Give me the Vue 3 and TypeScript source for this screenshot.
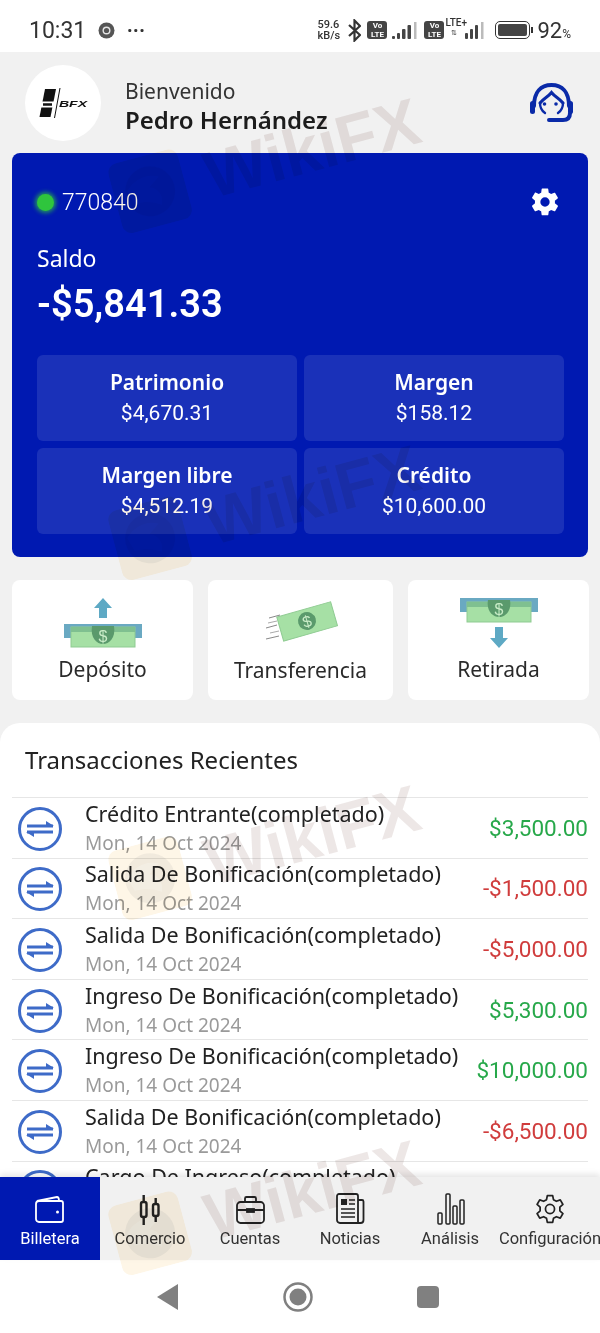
<script setup lang="ts">
const tiles = [
  { label: 'Patrimonio', value: '$4,670.31' },
  { label: 'Margen', value: '$158.12' },
  { label: 'Margen libre', value: '$4,512.19' },
  { label: 'Crédito', value: '$10,600.00' },
]

const rows = [
  { title: 'Crédito Entrante(completado)', amount: '$3,500.00', up: true },
  { title: 'Salida De Bonificación(completado)', amount: '-$1,500.00', up: false },
  { title: 'Salida De Bonificación(completado)', amount: '-$5,000.00', up: false },
  { title: 'Ingreso De Bonificación(completado)', amount: '$5,300.00', up: true },
  { title: 'Ingreso De Bonificación(completado)', amount: '$10,000.00', up: true },
  { title: 'Salida De Bonificación(completado)', amount: '-$6,500.00', up: false },
  { title: 'Cargo De Ingreso(completado)', amount: '', up: true },
]

const marks = [
  { top: 120, left: 110 },
  { top: 467, left: 110 },
  { top: 807, left: 110 },
  { top: 1162, left: 110 },
]
</script>

<template>
  <div class="screen">
    <div class="status">
      <div class="status-left">
        <span class="clock">10:31</span>
        <svg width="17" height="17" viewBox="0 0 17 17"><circle cx="8.500" cy="8.500" r="8" fill="#555" /><circle cx="8.500" cy="8.500" r="4" fill="#e4e4e4" /><circle cx="8.500" cy="8.500" r="2.600" fill="#555" /></svg>
        <span class="dots">···</span>
      </div>
      <div class="status-right">
        <span class="speed">59.6<br />kB/s</span>
        <svg class="bt" width="13" height="23" viewBox="0 0 13 23" fill="none" stroke="#333" stroke-width="2.200"><path d="M1 6l11 10-5.500 5.500V1.500L12 7 1 17" /></svg>
        <span class="volte">Vo<br />LTE</span>
        <svg class="sig1" width="26" height="19" viewBox="0 0 26 19" fill="#444"><rect x="0" y="15" width="3" height="3" rx="1" /><rect x="5" y="12" width="3" height="6" rx="1" /><rect x="10" y="8" width="3.500" height="10" rx="1" /><rect x="15.500" y="4" width="3.500" height="14" rx="1" /><rect x="22" y="1" width="2.500" height="17" fill="#bbb" /></svg>
        <span class="volte">Vo<br />LTE</span>
        <span class="lte">LTE+<br /><i>⇅</i></span>
        <svg class="sig2" width="20" height="19" viewBox="0 0 20 19" fill="#444"><rect x="0" y="12" width="3" height="6" rx="1" /><rect x="5" y="8" width="3" height="10" rx="1" /><rect x="10" y="4" width="3" height="14" rx="1" /><rect x="16" y="1" width="2.500" height="17" fill="#bbb" /></svg>
        <span class="battery"><b></b></span>
        <span class="nub"></span>
        <span class="pct">92<small>%</small></span>
      </div>
    </div>

    <header class="head">
      <div class="avatar">
        <svg width="50" height="34" viewBox="0 0 50 34">
          <path d="M7 3h11l-5.500 28H1.500z" fill="#111" />
          <path d="M1 15.500h19v6H1z" fill="#fff" />
          <path d="M5 18.500h9" stroke="#111" stroke-width="2.500" />
          <path d="M22 2l-5.500 30" stroke="#111" stroke-width="1" />
          <text x="21" y="21" class="logo-text" textLength="28" lengthAdjust="spacingAndGlyphs">BFX</text>
        </svg>
      </div>
      <div class="hello">
        <div class="hello-sub">Bienvenido</div>
        <div class="hello-name">Pedro Hernández</div>
      </div>
      <svg class="agent" width="46" height="42" viewBox="0 0 46 42" fill="none" stroke="#0a2aa8" stroke-linecap="round">
        <path d="M6 24C6 10 13 3 23.500 3S41 10 41 24" stroke-width="4" />
        <rect x="2" y="19" width="5" height="13" rx="2.500" fill="#0a2aa8" stroke="none" />
        <rect x="40" y="19" width="5" height="13" rx="2.500" fill="#0a2aa8" stroke="none" />
        <path d="M12 21c4-5 8-6 11.500-10.500C27 15 31 16 35 21" stroke-width="3" />
        <path d="M12 21c0 5 2 8 5 10M35 21c0 5-2 8-5 10" stroke-width="2.400" />
        <circle cx="16.500" cy="22" r="1.800" fill="#0a2aa8" stroke="none" />
        <circle cx="28" cy="22" r="1.800" fill="#0a2aa8" stroke="none" />
        <path d="M42 31c0 5-3 7-7 7H21" stroke-width="4" />
      </svg>
    </header>

    <section class="card">
      <div class="card-top">
        <div class="acct"><span class="dot"></span>770840</div>
        <svg width="32" height="32" viewBox="0 0 24 24" fill="#fff"><path fill-rule="evenodd" d="M19.400 13c.04-.3.06-.65.06-1s-.02-.7-.07-1l2.100-1.650c.2-.15.24-.42.12-.64l-2-3.460c-.12-.22-.4-.3-.6-.22l-2.500 1c-.52-.4-1.080-.73-1.700-.98l-.37-2.650A.5.5 0 0 0 14 1.900h-4a.5.5 0 0 0-.5.420l-.37 2.650c-.62.25-1.180.59-1.700.98l-2.500-1c-.22-.08-.48 0-.6.22l-2 3.460c-.13.22-.07.49.12.64L4.560 11c-.05.32-.1.66-.1 1s.03.680.08 1l-2.100 1.650c-.2.150-.25.420-.13.640l2 3.460c.12.220.4.300.6.220l2.500-1c.52.400 1.080.730 1.700.980l.37 2.650c.05.240.25.420.5.420h4c.25 0 .46-.18.5-.42l.37-2.650c.62-.25 1.180-.58 1.700-.98l2.500 1c.22.080.48 0 .6-.22l2-3.460c.12-.22.07-.49-.12-.64zM12 15.500a3.500 3.500 0 1 1 0-7 3.500 3.500 0 0 1 0 7z" /></svg>
      </div>
      <div class="saldo">Saldo</div>
      <div class="balance">-$5,841.33</div>
      <div class="tiles">
        <div v-for="t in tiles" :key="t.label" class="tile">
          <div class="tile-label">{{ t.label }}</div>
          <div class="tile-value">{{ t.value }}</div>
        </div>
      </div>
    </section>

    <section class="actions">
      <div class="action">
        <svg width="80" height="54" viewBox="0 0 80 54">
          <path d="M40 1l9 10h-5v10h-8V11h-5z" fill="#5ea9c4" />
          <rect x="1" y="27" width="78" height="14" fill="#6aa9c2" />
          <rect x="8" y="30" width="64" height="20" fill="#a6e0a5" stroke="#8fcb92" />
          <rect x="8" y="30" width="64" height="5" fill="#7fc090" />
          <path d="M29 29h22c2 12-5 18-11 18S27 41 29 29z" fill="#5a9a6c" />
          <text x="40" y="45" class="bill-s">$</text>
        </svg>
        <span class="action-label">Depósito</span>
      </div>
      <div class="action action-mid">
        <svg width="76" height="44" viewBox="0 0 76 44">
          <g transform="rotate(-16 44 21)">
            <rect x="16" y="9" width="56" height="25" fill="#a6e0a5" stroke="#8fcb92" />
            <circle cx="44" cy="21" r="9" fill="#5a9a6c" />
            <text x="44" y="27" class="bill-s">$</text>
          </g>
          <path d="M6 18l11-3M3 28l11-3M3 39l13-3" stroke="#888" stroke-width="1" />
          <path d="M5 23l9-2M7 33l9-2" stroke="#aaa" stroke-width="1" />
        </svg>
        <span class="action-label">Transferencia</span>
      </div>
      <div class="action">
        <svg width="80" height="54" viewBox="0 0 80 54">
          <rect x="1" y="1" width="78" height="14" fill="#6aa9c2" />
          <rect x="8" y="5" width="64" height="20" fill="#a6e0a5" stroke="#8fcb92" />
          <rect x="8" y="5" width="64" height="5" fill="#7fc090" />
          <path d="M29 3h22c2 11-5 17-11 17S27 14 29 3z" fill="#5a9a6c" />
          <text x="40" y="18" class="bill-s">$</text>
          <path d="M40 51l-9-10h5V30h8v11h5z" fill="#5ea9c4" />
        </svg>
        <span class="action-label">Retirada</span>
      </div>
    </section>

    <section class="recent">
      <h2 class="recent-title">Transacciones Recientes</h2>
      <div v-for="(r, i) in rows" :key="i" class="row">
        <svg class="swap" width="46" height="46" viewBox="0 0 46 46" fill="none" stroke="#3e6bc8">
          <circle cx="23" cy="23" r="20.500" stroke-width="3" />
          <path d="M10 20h26M36 26H10" stroke-width="3" />
          <path d="M29 15l8 5h-8zM17 31l-8-5h8z" fill="#3e6bc8" stroke="none" />
        </svg>
        <div class="row-text">
          <div class="row-title">{{ r.title }}</div>
          <div class="row-date">Mon, 14 Oct 2024</div>
        </div>
        <div class="row-amount" :class="r.up ? 'up' : 'down'">{{ r.amount }}</div>
      </div>
    </section>

    <nav class="tabs">
      <div class="tab tab-on">
        <svg width="30" height="30" viewBox="0 0 30 30" fill="none" stroke="#fff" stroke-width="1.800"><path d="M1 9a3 3 0 0 1 3-3h22a2 2 0 0 1 2 2v17a2 2 0 0 1-2 2H4a3 3 0 0 1-3-3z" /><path d="M2 6l20-4c1 0 2 1 2 4" /><circle cx="22.500" cy="17" r="1.500" fill="#fff" stroke="none" /></svg>
        <span>Billetera</span>
      </div>
      <div class="tab">
        <svg width="30" height="30" viewBox="0 0 30 30" fill="none" stroke="#222" stroke-width="2.400"><rect x="6" y="7" width="5.500" height="15" rx="2" /><path d="M8.700 0v7M8.700 22v8" /><rect x="18" y="9" width="5.500" height="12" rx="2" /><path d="M20.700 3v6M20.700 21v6" /></svg>
        <span>Comercio</span>
      </div>
      <div class="tab">
        <svg width="30" height="30" viewBox="0 0 30 30" fill="none" stroke="#222" stroke-width="1.800"><rect x="2" y="7" width="27" height="21" rx="3.500" /><path d="M10 7V3.500A1.500 1.500 0 0 1 11.500 2h8A1.500 1.500 0 0 1 21 3.500V7M2 15h27" /><rect x="12" y="14" width="7" height="3" fill="#222" /></svg>
        <span>Cuentas</span>
      </div>
      <div class="tab">
        <svg width="30" height="32" viewBox="0 0 30 32" fill="none" stroke="#222" stroke-width="1.800"><path d="M2 3a2 2 0 0 1 2-2h17a2 2 0 0 1 2 2v27H5a3 3 0 0 1-3-3z" /><path d="M23 7h4a1.500 1.500 0 0 1 1.500 1.500V27a3 3 0 0 1-3 3H20" /><rect x="6" y="6" width="6" height="6" fill="#222" stroke="none" /><path d="M14 7h6M14 11h6M6 16h14M6 20h14M6 24h14" stroke-width="1.600" /></svg>
        <span>Noticias</span>
      </div>
      <div class="tab">
        <svg width="30" height="32" viewBox="0 0 30 32" fill="none" stroke="#222" stroke-width="1.500"><rect x="3" y="20" width="4" height="11" rx="1" /><rect x="11" y="1" width="4" height="30" rx="1" /><rect x="18" y="13" width="4" height="18" rx="1" /><rect x="25" y="7" width="4" height="24" rx="1" /></svg>
        <span>Análisis</span>
      </div>
      <div class="tab">
        <svg width="32" height="32" viewBox="0 0 24 24" fill="none" stroke="#222" stroke-width="1.300" stroke-linejoin="round"><path d="M10 2h4l.6 3 2.200 1.200 2.900-1 2 3.400-2.300 2v2.800l2.300 2-2 3.400-2.900-1L14.600 19l-.6 3h-4l-.6-3-2.200-1.200-2.900 1-2-3.400 2.300-2v-2.800l-2.300-2 2-3.400 2.900 1L9.400 5z" /><circle cx="12" cy="12" r="3.400" /></svg>
        <span>Configuración</span>
      </div>
    </nav>

    <div class="navbar">
      <svg width="22" height="26" viewBox="0 0 22 26"><path d="M21 0v26L0 13z" fill="#808080" /></svg>
      <svg width="30" height="30" viewBox="0 0 30 30"><circle cx="15" cy="15" r="13.500" fill="none" stroke="#808080" stroke-width="2.500" /><circle cx="15" cy="15" r="8.500" fill="#808080" /></svg>
      <span class="nav-square"></span>
    </div>

    <div v-for="(m, i) in marks" :key="i" class="mark" :style="{ top: m.top + 'px', left: m.left + 'px' }">
      <svg class="mark-logo" width="72" height="72" viewBox="0 0 72 72">
        <rect width="72" height="72" rx="10" fill="#fbc96a" fill-opacity="0.16" />
        <circle cx="36" cy="36" r="25" fill="#6a6a7a" fill-opacity="0.09" />
        <path d="M14 30c10-10 24-12 34-6l-12 8c8 2 12 10 8 20-6-4-14-8-26-8z" fill="#fff" fill-opacity="0.2" />
      </svg>
      <span class="mark-text">WikiFX</span>
    </div>
  </div>
</template>

<style scoped>
.screen {
  position: relative;
  width: 600px;
  height: 1333px;
  overflow: hidden;
  display: flex;
  flex-direction: column;
  background: #f1f1f1;
  font-family: "Noto Sans", "Open Sans", sans-serif;
  color: #222;
}

.status {
  height: 52px;
  flex: none;
  box-sizing: border-box;
  background: #fff;
  display: flex;
  justify-content: space-between;
  align-items: center;
  padding: 8px 29px 0 29px;
  color: #333;
}

.status-left,
.status-right {
  display: flex;
  align-items: center;
}

.status-left {
  gap: 12px;
}

.clock {
  font-family: Roboto, sans-serif;
  font-size: 23px;
}

.dots {
  font-size: 18px;
  font-weight: 700;
  letter-spacing: 1px;
}

.speed {
  font-family: Roboto, sans-serif;
  font-size: 11px;
  font-weight: 500;
  line-height: 11px;
  width: 25px;
}

.bt {
  margin-left: 6px;
}

.volte {
  width: 20px;
  height: 18px;
  margin-left: 6px;
  border-radius: 3px;
  background: #444;
  color: #fff;
  font-family: Roboto, sans-serif;
  font-size: 8px;
  font-weight: 700;
  line-height: 9px;
  text-align: center;
}

.sig1 {
  margin-left: 5px;
}

.lte {
  width: 25px;
  font-family: Roboto, sans-serif;
  font-size: 10px;
  font-weight: 500;
  line-height: 9px;
  text-align: left;
  margin-left: 1px;
  margin-right: -5px;
  margin-top: -4px;
}

.lte i {
  font-style: normal;
  font-size: 7px;
  margin-left: 6px;
}

.battery {
  width: 35px;
  height: 18px;
  margin-left: 10px;
  border: 1.500px solid #333;
  border-radius: 5px;
  padding: 2px;
  box-sizing: border-box;
  display: flex;
}

.battery b {
  flex: 1;
  background: #444;
  border-radius: 2px;
}

.nub {
  width: 2px;
  height: 6px;
  margin-left: 1px;
  background: #333;
}

.pct {
  font-family: Roboto, sans-serif;
  font-size: 22px;
  margin-left: 4px;
}

.pct small {
  font-size: 12px;
}

.head {
  height: 101px;
  flex: none;
  display: flex;
  align-items: center;
  padding: 0 26px 0 25px;
}

.avatar {
  width: 76px;
  height: 76px;
  border-radius: 50%;
  background: #fff;
  display: flex;
  align-items: center;
  justify-content: center;
  margin-right: 24px;
}

.logo-text {
  font-family: "Liberation Sans", sans-serif;
  font-size: 9px;
  font-weight: 700;
  font-style: italic;
  fill: #111;
}

.hello {
  flex: 1;
  padding-top: 6px;
}

.hello-sub {
  font-size: 21px;
  line-height: 28px;
  color: #333;
}

.hello-name {
  font-size: 24px;
  line-height: 30px;
  font-weight: 600;
  color: #1c1c1c;
}

.card {
  flex: none;
  height: 404px;
  box-sizing: border-box;
  margin: 0 12px;
  padding: 32px 24px 0 25px;
  background: #0019b1;
  border-radius: 8px;
  color: #fff;
}

.card-top {
  display: flex;
  justify-content: space-between;
  align-items: center;
  height: 34px;
  padding-right: 3px;
}

.acct {
  display: flex;
  align-items: center;
  gap: 8px;
  font-size: 23px;
  font-family: Roboto, sans-serif;
  font-weight: 300;
}

.dot {
  width: 17px;
  height: 17px;
  border-radius: 50%;
  background: #2fc53d;
  box-shadow: 0 0 4px 2px rgba(47, 197, 61, 0.7);
}

.saldo {
  margin-top: 23px;
  font-size: 23px;
  line-height: 32px;
}

.balance {
  margin-top: 7px;
  font-size: 38px;
  line-height: 46px;
  font-weight: 600;
  font-family: Roboto, sans-serif;
}

.tiles {
  margin-top: 28px;
  display: grid;
  grid-template-columns: 1fr 1fr;
  gap: 7px;
}

.tile {
  height: 86px;
  border-radius: 6px;
  background: #1a31b9;
  display: flex;
  flex-direction: column;
  align-items: center;
  justify-content: center;
}

.tile-label {
  font-size: 21px;
  line-height: 30px;
  font-weight: 600;
}

.tile-value {
  font-size: 21px;
  line-height: 32px;
  font-family: Roboto, sans-serif;
}

.actions {
  flex: none;
  margin: 23px 0 0 12px;
  display: grid;
  grid-template-columns: 181px 185px 181px;
  gap: 15px;
}

.action {
  height: 120px;
  background: #fff;
  border-radius: 8px;
  display: flex;
  flex-direction: column;
  align-items: center;
  padding-top: 17px;
  box-sizing: border-box;
}

.action-mid svg {
  margin-top: 3px;
}

.action-label {
  margin-top: 3px;
  font-size: 21px;
  line-height: 30px;
  color: #2a2a2a;
}

.action-mid .action-label {
  margin-top: 11px;
}

.recent {
  flex: 1;
  min-height: 0;
  overflow: hidden;
  margin-top: 23px;
  padding: 0 12px;
  background: #fff;
  border-radius: 20px 20px 0 0;
}

.recent-title {
  margin: 0;
  height: 74px;
  box-sizing: border-box;
  padding: 20px 0 0 13px;
  font-size: 24px;
  line-height: 34px;
  font-weight: 400;
  color: #222;
}

.row {
  height: 60.600px;
  box-sizing: border-box;
  border-top: 1px solid #e6e6e6;
  display: flex;
  align-items: center;
}

.swap {
  flex: none;
  margin: 2px 0 0 5px;
}

.row-text {
  flex: 1;
  margin-left: 22px;
  white-space: nowrap;
}

.row-title {
  font-size: 21.500px;
  line-height: 32px;
  margin-top: -2px;
  color: #222;
}

.row-date {
  font-size: 19px;
  line-height: 26px;
  color: #9a9a9a;
}

.row-amount {
  font-size: 22.500px;
  font-family: Roboto, sans-serif;
}

.up {
  color: #27a84a;
}

.down {
  color: #d03c3c;
}

.tabs {
  flex: none;
  position: relative;
  height: 83px;
  background: #f1f1f1;
  box-shadow: 0 -3px 6px rgba(0, 0, 0, 0.1);
  display: grid;
  grid-template-columns: repeat(6, 100px);
}

.tab {
  display: flex;
  flex-direction: column;
  align-items: center;
  justify-content: flex-end;
  gap: 3px;
  padding-bottom: 10px;
  box-sizing: border-box;
  font-size: 16.500px;
  line-height: 22px;
  color: #333;
  white-space: nowrap;
  font-family: Roboto, sans-serif;
}

.tab-on {
  background: #0019b1;
  color: #fff;
}

.navbar {
  flex: none;
  height: 73px;
  background: #fff;
  display: grid;
  grid-template-columns: 22px 30px 22px;
  justify-content: center;
  column-gap: 104px;
  align-items: center;
  margin-left: -4px;
}

.nav-square {
  width: 22px;
  height: 22px;
  background: #808080;
  border-radius: 4px;
}

.bill-s {
  font-family: "Liberation Sans", sans-serif;
  font-size: 16px;
  text-anchor: middle;
  fill: #c9ecc8;
}

.mark {
  position: absolute;
  display: flex;
  align-items: center;
  gap: 22px;
  transform: rotate(-15deg);
  pointer-events: none;
  mix-blend-mode: multiply;
}

.mark-logo {
  flex: none;
}

.mark-text {
  font-family: "Liberation Sans", sans-serif;
  font-size: 66px;
  font-weight: 700;
  line-height: 80px;
  color: rgba(110, 60, 50, 0.12);
}
</style>

<style>
html,
body {
  margin: 0;
  background: #f1f1f1;
}
</style>
